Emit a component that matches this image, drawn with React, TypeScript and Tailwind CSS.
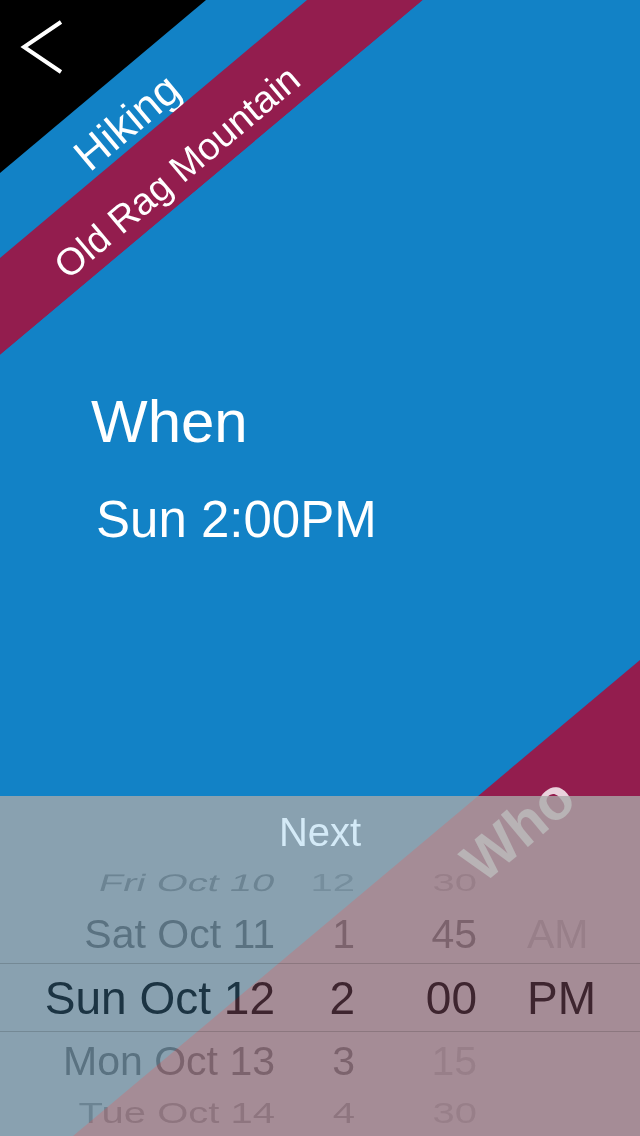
import React from 'react';

type Cell = { text: string; tone: string };

type RowProps = {
  height: string;
  size: string;
  date: Cell;
  hour?: Cell;
  min?: Cell;
  ampm?: Cell;
  cellExtra?: string;
  dateExtra?: string;
};

// picker text darkens what is under it instead of painting flat grey
const strong = 'text-[#2e2e2e] mix-blend-luminosity';
const mid = 'text-[#6c6c6c] mix-blend-luminosity';
const faint = 'text-[#7e7e7e] mix-blend-luminosity';
const ghost = 'text-[#888888] mix-blend-luminosity';

function PickerRow({ height, size, date, hour, min, ampm, cellExtra = '', dateExtra = '' }: RowProps) {
  return (
    <div className={`flex items-center leading-none whitespace-nowrap ${height} ${size}`}>
      <span className={`w-[275px] text-right ${date.tone} ${cellExtra} ${dateExtra}`}>{date.text}</span>
      <span className={`w-[80px] text-right ${hour?.tone ?? ''} ${cellExtra}`}>{hour?.text}</span>
      <span className={`w-[122px] text-right ${min?.tone ?? ''} ${cellExtra}`}>{min?.text}</span>
      <span className={`pl-[50px] ${ampm?.tone ?? ''} ${cellExtra}`}>{ampm?.text}</span>
    </div>
  );
}

export default function App() {
  return (
    <div className="relative h-[1136px] w-[640px] overflow-hidden bg-[#1282c6] font-['Liberation_Sans',Arial,sans-serif]">
      {/* back corner */}
      <svg className="absolute inset-0" width="640" height="1136" viewBox="0 0 640 1136">
        <polygon points="0,0 206,0 0,173" fill="#000000" />
      </svg>
      <span className="absolute left-[127px] top-[122px] -translate-x-1/2 -translate-y-1/2 rotate-[-40deg] whitespace-nowrap text-[44px] leading-none text-white">
        Hiking
      </span>

      {/* place band */}
      <svg className="absolute inset-0" width="640" height="1136" viewBox="0 0 640 1136">
        <polygon points="307,0 423,0 0,355 0,258" fill="#931d4e" />
      </svg>
      <span className="absolute left-[177px] top-[172px] -translate-x-1/2 -translate-y-1/2 rotate-[-40deg] whitespace-nowrap text-[38px] leading-none text-white">
        Old Rag Mountain
      </span>

      {/* next step */}
      <svg className="absolute inset-0" width="640" height="1136" viewBox="0 0 640 1136">
        <polygon points="423,0 640,0 640,660 73,1136 0,1136 0,355" fill="#1282c6" />
        <polygon points="640,660 640,1136 73,1136" fill="#931d4e" />
      </svg>
      <span className="absolute left-[518px] top-[829px] -translate-x-1/2 -translate-y-1/2 rotate-[-40deg] whitespace-nowrap text-[58px] font-bold leading-none text-white/80">
        Who
      </span>

      <div className="relative flex h-full flex-col">
        <button className="ml-[20px] mt-[18px] self-start">
          <svg width="46" height="58" viewBox="0 0 46 58" fill="none">
            <polyline points="41,4 4,29 41,54" stroke="#ffffff" strokeWidth="4" />
          </svg>
        </button>

        <h1 className="ml-[91px] mt-[316px] text-[60px] leading-none text-white">When</h1>
        <p className="ml-[96px] mt-[42px] text-[51px] leading-none text-white">Sun 2:00PM</p>

        {/* date picker sheet */}
        <div className="mt-auto h-[340px] bg-[rgba(170,170,170,0.79)]">
          <div className="flex h-[72px] items-center justify-center text-[40px] leading-none text-[#d4eaf7]">
            Next
          </div>
          <PickerRow
            height="h-[30px]"
            size="text-[40px]"
            cellExtra="scale-y-[0.6]"
            dateExtra="skew-x-[-10deg]"
            date={{ text: 'Fri Oct 10', tone: faint }}
            hour={{ text: '12', tone: ghost }}
            min={{ text: '30', tone: ghost }}
          />
          <PickerRow
            height="h-[65px] pt-[7px]"
            size="text-[41px]"
            date={{ text: 'Sat Oct 11', tone: mid }}
            hour={{ text: '1', tone: mid }}
            min={{ text: '45', tone: mid }}
            ampm={{ text: 'AM', tone: ghost }}
          />
          <PickerRow
            height="h-[69px] border-y border-black/15"
            size="text-[46px]"
            date={{ text: 'Sun Oct 12', tone: strong }}
            hour={{ text: '2', tone: strong }}
            min={{ text: '00', tone: strong }}
            ampm={{ text: 'PM', tone: strong }}
          />
          <PickerRow
            height="h-[58px]"
            size="text-[41px]"
            date={{ text: 'Mon Oct 13', tone: mid }}
            hour={{ text: '3', tone: mid }}
            min={{ text: '15', tone: ghost }}
          />
          <PickerRow
            height="h-[44px]"
            size="text-[40px]"
            cellExtra="scale-y-[0.75]"
            date={{ text: 'Tue Oct 14', tone: faint }}
            hour={{ text: '4', tone: faint }}
            min={{ text: '30', tone: ghost }}
          />
        </div>
      </div>
    </div>
  );
}
